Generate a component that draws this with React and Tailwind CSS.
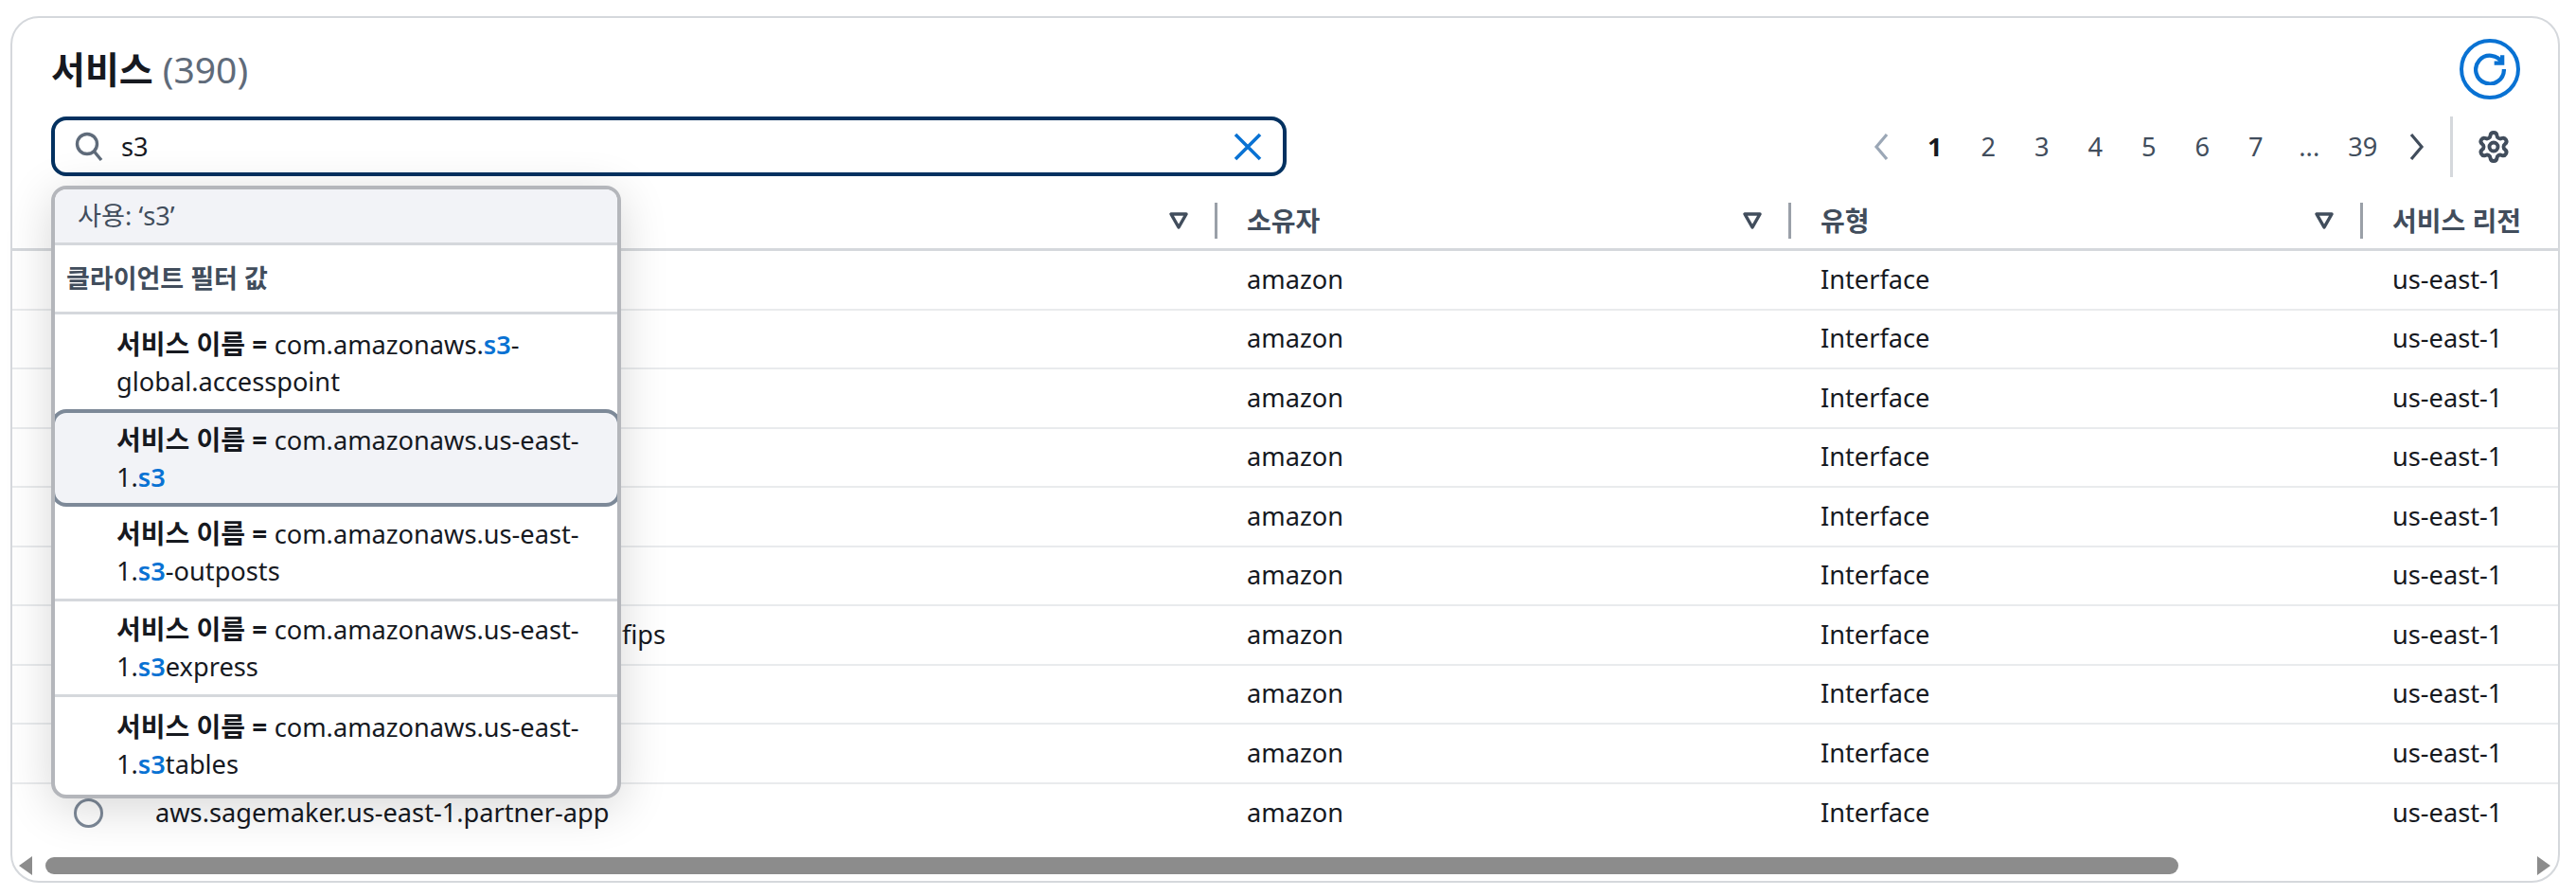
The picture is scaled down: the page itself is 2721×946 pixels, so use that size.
import React from "react";
import { Settings } from "lucide-react";

const font = { fontFamily: '"Noto Sans", "Noto Sans CJK KR", sans-serif' };

// only the parts of the names that show past the dropdown
const services = ["", "", "", "", "", "", "fips", "", "", "aws.sagemaker.us-east-1.partner-app"];

const suggestions = [
  { before: "com.amazonaws.", after: "-global.accesspoint" },
  { before: "com.amazonaws.us-east-1.", after: "", active: true },
  { before: "com.amazonaws.us-east-1.", after: "-outposts" },
  { before: "com.amazonaws.us-east-1.", after: "express" },
  { before: "com.amazonaws.us-east-1.", after: "tables" },
];

function FilterIcon() {
  return (
    <svg width="22" height="20" viewBox="0 0 22 20" fill="none">
      <path d="M3 3h16l-8 14z" stroke="#414d5c" strokeWidth="3.5" strokeLinejoin="round" />
    </svg>
  );
}

function HeaderCell({ label, filter = true }) {
  return (
    <div className="flex items-center h-full">
      <div className="w-[3px] h-[38px] bg-[#9aa0a8] shrink-0" />
      <span className="ml-[31px] text-[#414d5c] font-semibold text-[28px]">{label}</span>
      {filter && (
        <span className="ml-auto mr-[27px] flex">
          <FilterIcon />
        </span>
      )}
    </div>
  );
}

function Chevron({ dir, color }) {
  return (
    <svg width="20" height="32" viewBox="0 0 20 32" fill="none">
      <path
        d={dir === "left" ? "M15 3L4 16l11 13" : "M5 3l11 13L5 29"}
        stroke={color}
        strokeWidth="3.2"
      />
    </svg>
  );
}

function Pagination() {
  const pages = ["1", "2", "3", "4", "5", "6", "7", "...", "39"];
  return (
    <div className="ml-auto flex items-center h-full pr-[26px]">
      <div className="w-[56px] flex justify-center">
        <Chevron dir="left" color="#9ba7b6" />
      </div>
      {pages.map((p, i) => (
        <span
          key={p}
          className={`w-[56.5px] pt-[2px] text-center ${i === 0 ? "font-bold text-[#16191f]" : "text-[#414d5c]"}`}
        >
          {p}
        </span>
      ))}
      <div className="w-[56px] flex justify-center">
        <Chevron dir="right" color="#414d5c" />
      </div>
      <div className="w-[3px] h-[64px] bg-[#d5d8dc] ml-[8px]" />
      <div className="w-[85px] flex justify-center text-[#414d5c]">
        <Settings size={36} strokeWidth={2.6} />
      </div>
    </div>
  );
}

function SuggestionDropdown() {
  return (
    <div className="absolute left-[41px] top-[177px] w-[602px] h-[647px] bg-white border-[4px] border-[#b4b6bb] rounded-2xl shadow-[0_10px_50px_rgba(0,0,0,0.16)] z-10 overflow-hidden">
      <div className="h-[59px] flex items-center pl-[24px] bg-[#f2f3f7] border-b-[3px] border-[#d5d8dc] text-[#414d5c]">
        사용: ‘s3’
      </div>
      <div className="h-[73px] flex items-center pl-[12px] border-b-[3px] border-[#d5d8dc] font-bold text-[#414d5c] text-[27px]">
        클라이언트 필터 값
      </div>
      {suggestions.map((s, i) => (
        <div
          key={i}
          className={`pl-[65px] pr-[20px] flex items-center leading-[39px] text-[#16191f] ${
            s.active
              ? "h-[103px] -my-[1px] -mx-[4px] bg-[#f2f3f7] border-[4px] border-[#7d8998] rounded-2xl pl-[65px] pr-[24px]"
              : i < 4 && !suggestions[i + 1].active
                ? "h-[101px] border-b-[3px] border-[#d5d8dc]"
                : "h-[101px]"
          }`}
        >
          <div>
            <b className="font-bold text-[28px]">서비스 이름 = </b>
            {s.before}
            <span className="text-[#0972d3] font-semibold">s3</span>
            {s.after}
          </div>
        </div>
      ))}
    </div>
  );
}

export default function App() {
  return (
    <div className="w-[2721px] h-[946px] bg-white pt-[17px] pl-[11px] overflow-hidden text-[27.2px]" style={font}>
      <div className="relative w-[2693px] h-[915px] border-2 border-[#d5d8dc] rounded-[30px] flex flex-col">
        {/* Header */}
        <div className="pl-[41px] pt-[22px] flex items-center justify-between pr-[40px]">
          <h2 className="text-[39px] font-bold text-[#16191f]">
            서비스 <span className="font-normal text-[#5f6b7a]">(390)</span>
          </h2>
          <button className="w-[64px] h-[64px] rounded-full border-[4px] border-[#0972d3] flex items-center justify-center">
            <svg width="34" height="34" viewBox="0 0 16 16" fill="none" stroke="#0972d3" strokeWidth="2">
              <path d="M14.2 5A7 7 0 1 0 15 8" />
              <path d="M14.2 1v4h-4" />
            </svg>
          </button>
        </div>

        {/* Search and pagination */}
        <div className="mt-[18px] pl-[41px] h-[63px] flex items-center">
          <div className="w-[1305px] h-full border-[4px] border-[#033160] rounded-2xl flex items-center pl-[20px] pr-[22px]">
            <svg width="32" height="32" viewBox="0 0 32 32" fill="none" stroke="#5f6b7a" strokeWidth="3.4">
              <circle cx="14" cy="13" r="10.5" />
              <path d="M21.5 21L29 30" />
            </svg>
            <span className="ml-[18px] pt-[2px] text-[#16191f]">s3</span>
            <svg className="ml-auto" width="30" height="30" viewBox="0 0 30 30" fill="none" stroke="#0972d3" strokeWidth="3.6">
              <path d="M2 2l26 26M28 2L2 28" />
            </svg>
          </div>
          <Pagination />
        </div>

        {/* Table */}
        <div className="mt-[17px] grid grid-cols-[1270px_606px_604px_1fr] h-[62px] border-b-[3px] border-[#d5d8dc]">
          <div className="flex items-center justify-end pr-[27px]">
            <FilterIcon />
          </div>
          <HeaderCell label="소유자" />
          <HeaderCell label="유형" />
          <HeaderCell label="서비스 리전" filter={false} />
        </div>
        {services.map((name, i) => (
          <div
            key={i}
            className={`grid grid-cols-[1270px_606px_604px_1fr] h-[62.5px] items-center text-[#16191f] ${i < 9 ? "border-b-2 border-[#e9ebed]" : ""}`}
          >
            <div className="flex items-center pl-[65px]">
              <span className="w-[31px] h-[31px] rounded-full border-[3px] border-[#7d8998] shrink-0" />
              <span className={`whitespace-nowrap ${name === "fips" ? "ml-[548px]" : "ml-[55px]"}`}>{name}</span>
            </div>
            <div className="pl-[34px]">amazon</div>
            <div className="pl-[34px]">Interface</div>
            <div className="pl-[34px]">us-east-1</div>
          </div>
        ))}

        {/* Horizontal scrollbar */}
        <div className="mt-auto h-[25px] pb-[7px] flex items-center">
          <svg className="ml-[6px]" width="16" height="22" viewBox="0 0 16 22">
            <path d="M15 1v20L1 11z" fill="#8c8c8c" />
          </svg>
          <div className="ml-[13px] w-[2253px] h-[18px] rounded-full bg-[#8c8c8c]" />
          <svg className="ml-auto mr-[7px]" width="16" height="22" viewBox="0 0 16 22">
            <path d="M1 1v20l14-10z" fill="#8c8c8c" />
          </svg>
        </div>

        <SuggestionDropdown />
      </div>
    </div>
  );
}
